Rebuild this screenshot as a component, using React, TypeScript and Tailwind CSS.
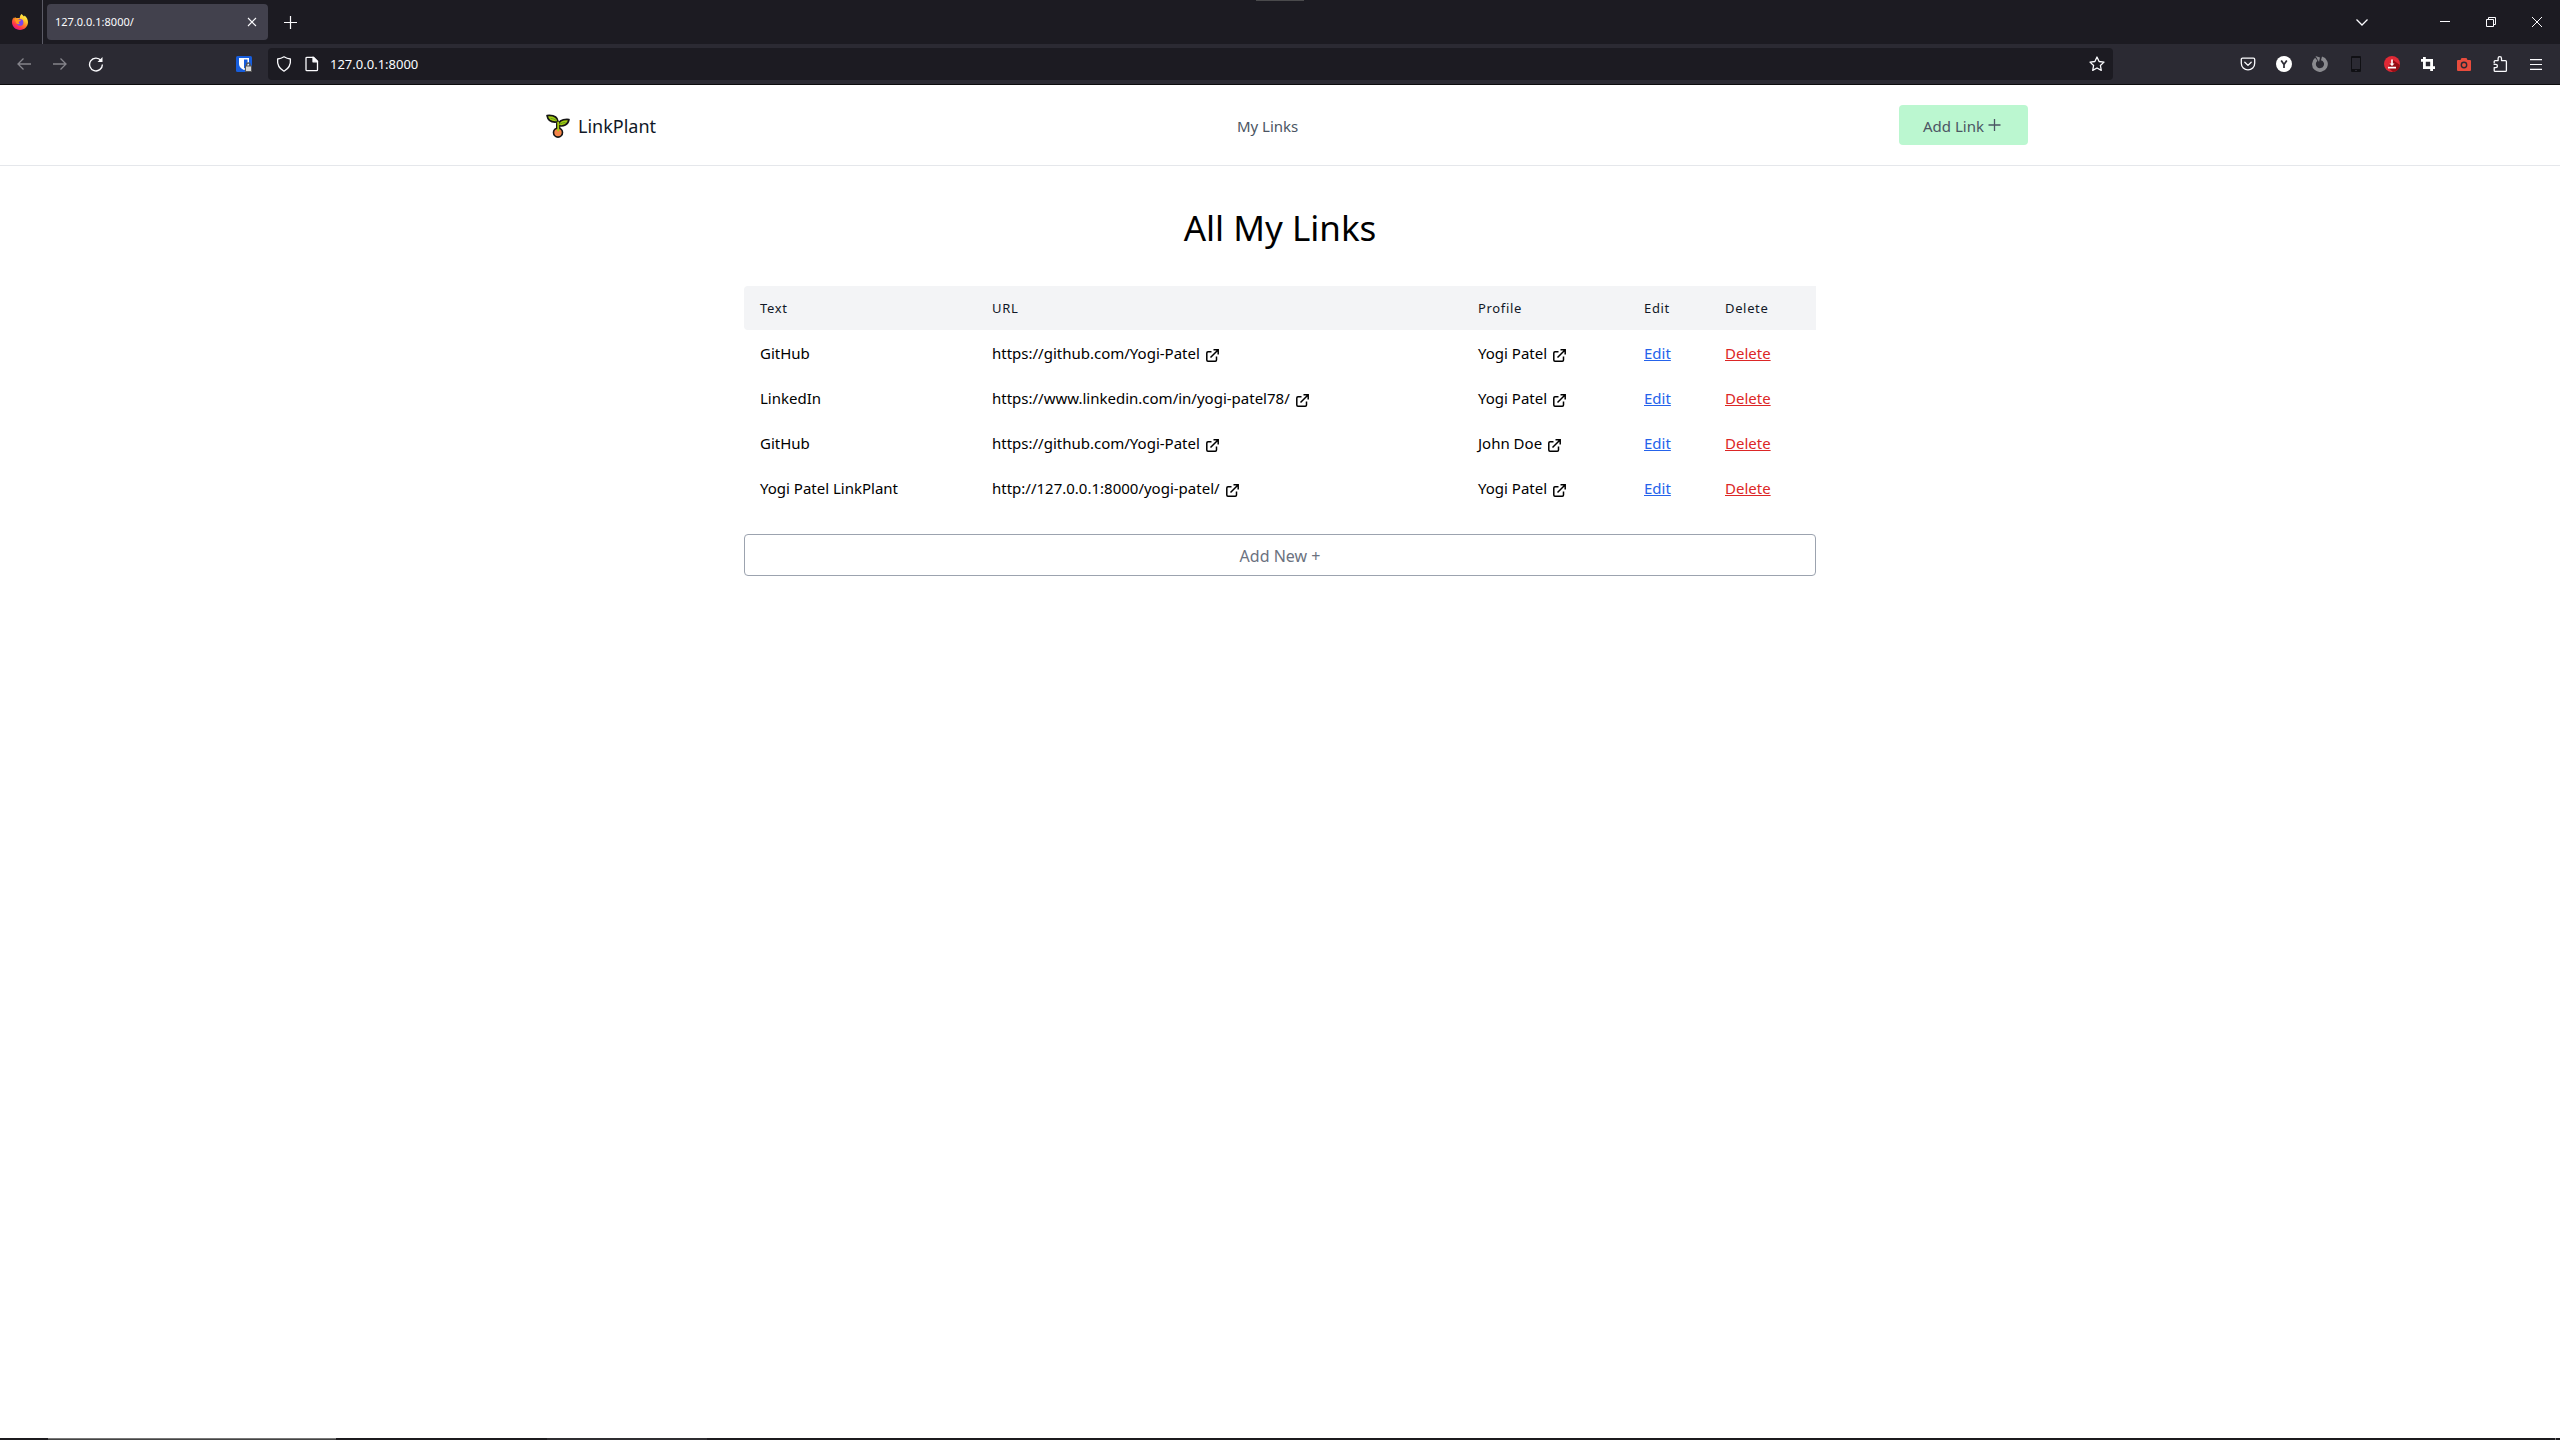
import type { ReactNode } from "react";

type LinkItem = { text: string; url: string; profile: string };

const links: LinkItem[] = [
  { text: "GitHub", url: "https://github.com/Yogi-Patel", profile: "Yogi Patel" },
  { text: "LinkedIn", url: "https://www.linkedin.com/in/yogi-patel78/", profile: "Yogi Patel" },
  { text: "GitHub", url: "https://github.com/Yogi-Patel", profile: "John Doe" },
  { text: "Yogi Patel LinkPlant", url: "http://127.0.0.1:8000/yogi-patel/", profile: "Yogi Patel" },
];

function IconButton({ label, className = "", children }: { label: string; className?: string; children: ReactNode }) {
  return (
    <button type="button" aria-label={label} className={`flex items-center justify-center ${className}`}>
      {children}
    </button>
  );
}

function FirefoxLogo() {
  return (
    <svg width="16" height="16" viewBox="0 0 16 16">
      <defs>
        <linearGradient id="fox" x1="13" y1="1" x2="4" y2="15" gradientUnits="userSpaceOnUse">
          <stop offset="0" stopColor="#fff44f" />
          <stop offset=".3" stopColor="#ffc62e" />
          <stop offset=".55" stopColor="#ff7a2a" />
          <stop offset=".8" stopColor="#ff3647" />
          <stop offset="1" stopColor="#e31587" />
        </linearGradient>
      </defs>
      <path d="M9.600 0c.8.9 1.600 1.600 2.400 2.400.4-.1.500-.5.600-.9C14.800 3.200 16 5.800 16 8.300 16 12.600 12.400 16 8 16S0 12.600 0 8.300C0 6.300.6 4.700 1.500 3.400l.3 1L3 3.200l1.300.9c1.400-.3 2.400-.2 3.400.2C7.800 2.500 8.500.9 9.600 0z" fill="url(#fox)" />
      <circle cx="8" cy="8.400" r="3.400" fill="#7a45ee" />
      <path d="M2.500 5c1.500-.7 3.500-.3 4.500.7l2 .5c-.2 1-1.800 1-2.200 1.800-.3.900.2 1.500 1.200 1.800-2.200 1-4-.2-4.300-2z" fill="#ff9a1e" />
    </svg>
  );
}

function PlantLogo() {
  return (
    <svg width="24" height="24" viewBox="0 0 24 24" strokeLinejoin="round" strokeLinecap="round">
      <path d="M12.200 9.500v6" stroke="#151515" strokeWidth="4.400" />
      <path d="M1 1.500c5.500-.5 10.500 1 11.200 6.300C6.500 8.800 2 6.800 1 1.500z" fill="#a6ce12" stroke="#151515" strokeWidth="1.600" />
      <path d="M23 5.500c-5.200-.4-10.300.9-10.800 6 5.300 1.400 9.800-.7 10.800-6z" fill="#a6ce12" stroke="#151515" strokeWidth="1.600" />
      <path d="M5 4.500c2 .2 3.500.7 5 1.700M19 8.500c-1.700.1-3.200.6-4.500 1.300" stroke="#5f9a1c" strokeWidth="1" fill="none" />
      <circle cx="12" cy="18.600" r="4.500" fill="#f58549" stroke="#151515" strokeWidth="1.600" />
      <path d="M12.200 8.500v8" stroke="#a6ce12" strokeWidth="1.900" />
    </svg>
  );
}

function ExternalIcon() {
  return (
    <svg width="13" height="13" viewBox="0 0 13 13" fill="none" stroke="currentColor" strokeWidth="1.500" className="ml-1.5 inline-block align-[-3px]">
      <path d="M5.500 2.700H2A1.200 1.200 0 0 0 .8 3.900V11A1.200 1.200 0 0 0 2 12.200h7.300A1.200 1.200 0 0 0 10.500 11V7.500" />
      <path d="M7.500.8h4.700v4.700M12 1 4.500 8.500" />
    </svg>
  );
}

function TabBar() {
  return (
    <div className="relative flex h-11 items-center bg-[#1c1b22] text-[#fbfbfe]">
      {/* drag handle on the window's top edge */}
      <div className="absolute top-0 left-1/2 h-px w-12 -translate-x-1/2 bg-[#4a4a4c]" />
      <div className="flex h-full w-[43px] items-center justify-center border-r border-[#5b5b66] pr-0.5">
        <FirefoxLogo />
      </div>
      <div className="ml-1 flex h-9 w-[221px] items-center justify-between rounded bg-[#42414d] px-2">
        <span className="text-[11px]">127.0.0.1:8000/</span>
        <IconButton label="Close tab" className="h-4 w-4">
          <svg width="10" height="10" viewBox="0 0 10 10" stroke="currentColor" strokeWidth="1.100">
            <path d="m1 1 8 8M9 1 1 9" />
          </svg>
        </IconButton>
      </div>
      <IconButton label="New tab" className="ml-3 h-6 w-5">
        <svg width="13" height="13" viewBox="0 0 13 13" stroke="currentColor" strokeWidth="1.200">
          <path d="M6.500 0v13M0 6.500h13" />
        </svg>
      </IconButton>
      <div className="ml-auto flex h-full items-center">
        <IconButton label="List all tabs" className="mr-9 h-6 w-12">
          <svg width="12" height="7" viewBox="0 0 12 7" fill="none" stroke="currentColor" strokeWidth="1.300">
            <path d="m.5.5 5.500 5.500L11.500.5" />
          </svg>
        </IconButton>
        <IconButton label="Minimize" className="h-full w-[46px]">
          <svg width="10" height="10" viewBox="0 0 10 10" fill="currentColor">
            <path d="M0 4h10v1H0z" />
          </svg>
        </IconButton>
        <IconButton label="Restore" className="h-full w-[46px]">
          <svg width="10" height="10" viewBox="0 0 10 10" fill="none" stroke="currentColor">
            <path d="M.5 2.500h7v7h-7zM2.500 2.500v-2h7v7h-2" />
          </svg>
        </IconButton>
        <IconButton label="Close" className="h-full w-[46px]">
          <svg width="10" height="10" viewBox="0 0 10 10" stroke="currentColor" strokeWidth="1">
            <path d="m0 0 10 10M10 0 0 10" />
          </svg>
        </IconButton>
      </div>
    </div>
  );
}

function Extensions() {
  return (
    <div className="flex items-center">
      <IconButton label="Save to Pocket" className="h-8 w-9">
        <svg width="16" height="16" viewBox="0 0 16 16" fill="none" stroke="currentColor" strokeWidth="1.300" strokeLinecap="round" strokeLinejoin="round">
          <path d="M2.500 2.200h11c.7 0 1.200.5 1.200 1.200v3.800a6.700 6.700 0 0 1-13.400 0V3.400c0-.7.500-1.200 1.200-1.200z" />
          <path d="M4.800 6.300 8 9.400l3.200-3.100" />
        </svg>
      </IconButton>
      <IconButton label="Account" className="h-8 w-9">
        <svg width="16" height="16" viewBox="0 0 16 16">
          <circle cx="8" cy="8" r="8" fill="#fff" />
          <path d="M5.200 4.500 8 8.500l2.800-4M8 8v4" fill="none" stroke="#2b2a33" strokeWidth="1.700" />
        </svg>
      </IconButton>
      <IconButton label="Session manager" className="h-8 w-9">
        <svg width="16" height="16" viewBox="0 0 16 16" fill="none" stroke="#8a8a8f">
          <path d="M9.500 2.300A6 6 0 1 1 4.300 3.300" strokeWidth="3.800" />
          <path d="M3.500 0 8 1.500 7 6z" fill="#8a8a8f" stroke="none" />
        </svg>
      </IconButton>
      <IconButton label="Mobile view" className="h-8 w-9">
        <svg width="10" height="16" viewBox="0 0 10 16">
          <rect width="10" height="16" rx="1" fill="#101014" />
          <path d="M1 2h8v11H1z" fill="#2b2a33" />
          <path d="M4 14h2v1H4z" fill="#2b2a33" />
        </svg>
      </IconButton>
      <IconButton label="Download" className="h-8 w-9">
        <svg width="16" height="16" viewBox="0 0 16 16">
          <circle cx="8" cy="8" r="8" fill="#df2935" />
          <path d="m9 4 6.900 5A8 8 0 0 1 9 16l-5-4.500z" fill="#970d14" />
          <path d="M7.200 3.500h1.600v4h1.700L8 10 5.500 7.500h1.700zM4 10.800h8v1.700H4z" fill="#fff" />
        </svg>
      </IconButton>
      <IconButton label="Crop" className="h-8 w-9">
        <svg width="14" height="14" viewBox="0 0 14 14" fill="none" stroke="#fff" strokeWidth="2.800">
          <path d="M3.400 0v10.600H14M0 3.400h10.600V14" />
        </svg>
      </IconButton>
      <IconButton label="Screenshot" className="h-8 w-9">
        <svg width="14" height="13" viewBox="0 0 14 13">
          <path d="M1 2h2.500l1-2h5l1 2H13a1 1 0 0 1 1 1v9a1 1 0 0 1-1 1H1a1 1 0 0 1-1-1V3a1 1 0 0 1 1-1z" fill="#e84c3d" />
          <circle cx="7" cy="7" r="2.700" fill="none" stroke="#2b2a33" strokeWidth="1.400" />
        </svg>
      </IconButton>
      <IconButton label="Extensions" className="h-8 w-9">
        <svg width="16" height="16" viewBox="0 0 16 16" fill="none" stroke="currentColor" strokeWidth="1.300" strokeLinejoin="round">
          <path d="M2.200 7.300V5.500c0-.5.400-.9.900-.9h3V2.400a1.700 1.700 0 0 1 3.400 0v2.200h4c.5 0 .9.400.9.900v8.900c0 .5-.4.900-.9.900H3.100c-.5 0-.9-.4-.9-.9v-2.800h1.600a1.600 1.600 0 0 0 0-3.200H1.600" />
        </svg>
      </IconButton>
      <IconButton label="Open menu" className="h-8 w-9">
        <svg width="12" height="11" viewBox="0 0 12 11" fill="currentColor">
          <path d="M0 0h12v1.200H0zM0 4.900h12v1.200H0zM0 9.800h12V11H0z" />
        </svg>
      </IconButton>
    </div>
  );
}

function Toolbar() {
  return (
    <div className="flex h-[41px] items-center border-b border-[#0c0c0d] bg-[#2b2a33] pr-1.5 text-[#fbfbfe]">
      <IconButton label="Back" className="ml-1.5 h-8 w-9 text-[#85848b]">
        <svg width="14" height="12" viewBox="0 0 14 12" fill="none" stroke="currentColor" strokeWidth="1.300">
          <path d="M6.500.5 1 6l5.500 5.500M1 6h13" />
        </svg>
      </IconButton>
      <IconButton label="Forward" className="h-8 w-9 text-[#85848b]">
        <svg width="14" height="12" viewBox="0 0 14 12" fill="none" stroke="currentColor" strokeWidth="1.300">
          <path d="M7.500.5 13 6l-5.500 5.500M13 6H0" />
        </svg>
      </IconButton>
      <IconButton label="Reload" className="h-8 w-9">
        <svg width="16" height="16" viewBox="0 0 16 16" fill="none" stroke="currentColor" strokeWidth="1.400">
          <path d="M13 4.500A6.400 6.400 0 1 0 14.400 8.500" />
          <path d="M14.500 1v5h-5z" fill="currentColor" stroke="none" />
        </svg>
      </IconButton>
      <IconButton label="Bitwarden" className="ml-28 h-8 w-9">
        <svg width="16" height="16" viewBox="0 0 16 16">
          <rect width="16" height="16" rx="1.500" fill="#175ddc" />
          <path d="M3 2h10v6c0 3-2.500 5-5 6-2.500-1-5-3-5-6z" fill="#fff" />
          <path d="M8 3.500h3.500V8c0 2-1.500 3.500-3.500 4.500z" fill="#175ddc" />
          <path d="M10.500 10V8.800a1.800 1.800 0 0 1 3.600 0V10" fill="none" stroke="#555" strokeWidth="1.300" />
          <path d="M9 9.500h7V16H9z" fill="#555" />
          <path d="M10 10.500h5V15h-5z" fill="#d8d8d8" />
        </svg>
      </IconButton>
      <div className="ml-1.5 flex h-8 flex-1 items-center rounded bg-[#1c1b22] px-2">
        <svg width="16" height="16" viewBox="0 0 16 16" fill="none" stroke="currentColor" strokeWidth="1.300" strokeLinejoin="round">
          <path d="M8 .8c2 1.300 4 2 6.400 2.200.5 5-1.400 9.500-6.400 12.200C3 12.500 1.100 8 1.600 3 4 2.800 6 2.100 8 .8z" />
        </svg>
        <svg width="16" height="16" viewBox="0 0 16 16" fill="none" stroke="currentColor" strokeWidth="1.300" strokeLinejoin="round" className="ml-3">
          <path d="M3 1.300h6.500l4 4v8.400c0 .6-.4 1-1 1H3c-.6 0-1-.4-1-1V2.300c0-.6.400-1 1-1z" />
          <path d="M9 1.300v4.500h4.500z" fill="currentColor" />
        </svg>
        <input
          aria-label="Address"
          defaultValue="127.0.0.1:8000"
          className="ml-2.5 min-w-0 flex-1 bg-transparent pt-0.5 text-[13px] outline-none"
        />
        <IconButton label="Bookmark this page" className="h-6 w-4">
          <svg width="16" height="16" viewBox="0 0 16 16" fill="none" stroke="currentColor" strokeWidth="1.300" strokeLinejoin="round" className="shrink-0">
            <path d="m8 1 2.100 4.500 4.900.6-3.600 3.400.9 4.900L8 12l-4.300 2.400.9-4.900L1 6.100l4.900-.6z" />
          </svg>
        </IconButton>
      </div>
      <div className="w-[117px]" />
      <Extensions />
    </div>
  );
}

function Header() {
  return (
    <header className="border-b border-gray-200">
      <div className="mx-auto flex max-w-screen-2xl items-center justify-between px-5 py-5 text-[#4b5563]">
        <a href="#" className="ml-3.5 flex items-center gap-2 pt-0.5 text-lg text-[#111827]">
          <PlantLogo />
          <span>LinkPlant</span>
        </a>
        <a href="#links" className="mr-5 pt-0.5 text-[15px]">My Links</a>
        <button type="button" className="flex h-10 items-center gap-1 rounded bg-[#bbf7d0] px-6 text-[15px]">
          <span className="pt-0.5">Add Link</span>
          <svg width="16" height="16" viewBox="0 0 16 16" stroke="currentColor" strokeWidth="1.300">
            <path d="M6.500 2v12M.5 8h12" />
          </svg>
        </button>
      </div>
    </header>
  );
}

function LinksTable() {
  return (
    <table className="w-full table-fixed text-left">
      <colgroup>
        <col className="w-[232px]" />
        <col />
        <col className="w-[166px]" />
        <col className="w-[81px]" />
        <col className="w-[107px]" />
      </colgroup>
      <thead>
        <tr className="h-11 bg-[#f3f4f6] text-[13px] tracking-wider text-[#111827]">
          <th className="rounded-l px-4 pt-0.5 font-normal">Text</th>
          <th className="px-4 pt-0.5 font-normal">URL</th>
          <th className="px-4 pt-0.5 font-normal">Profile</th>
          <th className="px-4 pt-0.5 font-normal">Edit</th>
          <th className="px-4 pt-0.5 font-normal">Delete</th>
        </tr>
      </thead>
      <tbody>
        {links.map((link, index) => (
          <tr key={index} className="h-[45px] text-[15px] text-black">
            <td className="px-4 pt-0.5">{link.text}</td>
            <td className="px-4 pt-0.5">
              <a href={link.url}>
                {link.url}
                <ExternalIcon />
              </a>
            </td>
            <td className="px-4 pt-0.5">
              <a href="#profile">
                {link.profile}
                <ExternalIcon />
              </a>
            </td>
            <td className="px-4 pt-0.5">
              <a href="#edit" className="text-[#2563eb] underline">Edit</a>
            </td>
            <td className="px-4 pt-0.5">
              <a href="#delete" className="text-[#dc2626] underline">Delete</a>
            </td>
          </tr>
        ))}
      </tbody>
    </table>
  );
}

export default function App() {
  return (
    <div className="flex min-h-screen flex-col bg-white font-['Noto_Sans','Open_Sans',sans-serif]">
      <TabBar />
      <Toolbar />
      <Header />
      <main id="links" className="mx-auto w-full max-w-[1072px] flex-1">
        <h1 className="mt-10 mb-9 text-center text-[35px] leading-11 text-black">All My Links</h1>
        <LinksTable />
        <button type="button" className="mt-6 h-[42px] w-full rounded border border-[#9ca3af] pt-0.5 text-base text-[#6b7280]">
          Add New +
        </button>
      </main>
      {/* top edge of the taskbar */}
      <div className="flex h-0.5 bg-[#1c1b1e]">
        <div className="ml-12 w-72 border-t border-[#777] bg-[#444]" />
        <div className="ml-[211px] w-40 bg-[#2f2e31]" />
        <div className="mr-1 ml-auto w-px bg-[#777]" />
      </div>
    </div>
  );
}
